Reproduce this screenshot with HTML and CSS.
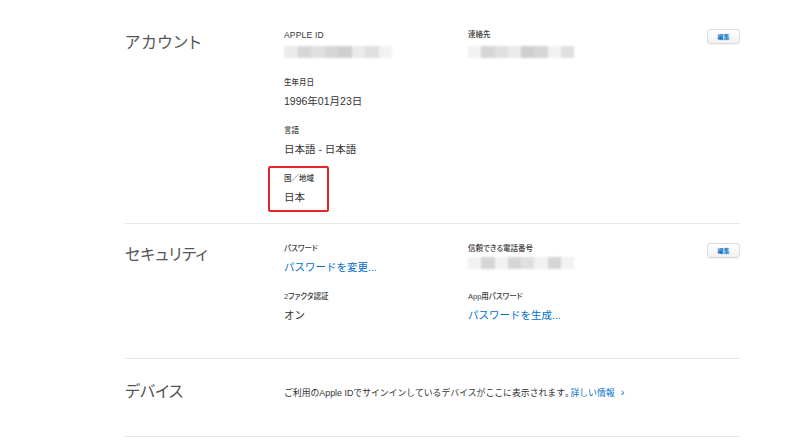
FILE: index.html
```html
<!DOCTYPE html>
<html lang="ja">
<head>
<meta charset="utf-8">
<title>Apple ID</title>
<link rel="stylesheet" href="styles.css">
</head>
<body>
<main class="page">
  <section class="section account">
    <h2 class="title">アカウント</h2>
    <div class="fields">
      <div class="field">
        <div class="label latin">APPLE ID</div>
        <div class="blur w108"><i class="b1"></i><i class="b2"></i><i class="b3"></i><i class="b2"></i><i class="b4"></i><i class="b1"></i><i class="b3"></i><i class="b5"></i></div>
      </div>
      <div class="field">
        <div class="label">連絡先</div>
        <div class="blur w106"><i class="b5"></i><i class="b2"></i><i class="b3"></i><i class="b1"></i><i class="b4"></i><i class="b2"></i><i class="b5"></i><i class="b3"></i></div>
      </div>
      <div class="field">
        <div class="label">生年月日</div>
        <div class="value">1996年01月23日</div>
      </div>
      <div class="field empty"></div>
      <div class="field">
        <div class="label">言語</div>
        <div class="value">日本語 - 日本語</div>
      </div>
      <div class="field empty"></div>
      <div class="field marked">
        <div class="label">国／地域</div>
        <div class="value">日本</div>
      </div>
    </div>
    <button class="edit">編集</button>
  </section>

  <section class="section security">
    <h2 class="title">セキュリティ</h2>
    <div class="fields">
      <div class="field">
        <div class="label">パスワード</div>
        <a class="value link" href="#">パスワードを変更...</a>
      </div>
      <div class="field">
        <div class="label">信頼できる電話番号</div>
        <div class="blur w106 phone"><i class="b5"></i><i class="b2"></i><i class="b5"></i><i class="b2"></i><i class="b3"></i><i class="b5"></i><i class="b2"></i><i class="b5"></i></div>
      </div>
      <div class="field">
        <div class="label">2ファクタ認証</div>
        <div class="value">オン</div>
      </div>
      <div class="field">
        <div class="label">App用パスワード</div>
        <a class="value link" href="#">パスワードを生成...</a>
      </div>
    </div>
    <button class="edit">編集</button>
  </section>

  <section class="section devices">
    <h2 class="title">デバイス</h2>
    <p class="note">ご利用のApple IDでサインインしているデバイスがここに表示されます<span class="stop">。</span><a class="link" href="#">詳しい情報<span class="chev">›</span></a></p>
  </section>
</main>
</body>
</html>
```

FILE: styles.css
```css
html, body {
  margin: 0;
  padding: 0;
  background: #ffffff;
}

body {
  font-family: "Liberation Sans", "Noto Sans CJK JP", sans-serif;
  color: #333333;
}

.page {
  width: 615px;
  margin-left: 125px;
}

.section {
  display: grid;
  grid-template-columns: 159px 1fr auto;
  align-items: start;
  border-bottom: 1px solid #e6e6e6;
}

.account {
  padding: 29px 0 18px;
}

.security {
  padding: 19px 0 35px;
}

.devices {
  grid-template-columns: 159px 1fr;
  align-items: start;
  box-sizing: border-box;
  height: 78px;
  padding-top: 21px;
}

.title {
  margin: 2px 0 0;
  font-family: "Noto Sans CJK JP", sans-serif;
  font-feature-settings: "palt";
  font-size: 16px;
  line-height: 20px;
  font-weight: 400;
  color: #555555;
}

.account .title {
  letter-spacing: 1.4px;
}

.security .title {
  margin-top: 0;
}

.devices .title {
  margin: 0;
}

.fields {
  display: grid;
  grid-template-columns: 184px 1fr;
  row-gap: 16px;
}

.field {
  position: relative;
  min-height: 32px;
}

.label {
  font-size: 7.5px;
  line-height: 12px;
  height: 12px;
  font-weight: 500;
  color: #3a3a3a;
  font-feature-settings: "palt";
}

.label.latin {
  font-size: 8.5px;
  font-weight: 400;
  letter-spacing: 0.2px;
  color: #333333;
}

.value {
  display: block;
  margin-top: 4px;
  font-size: 10.5px;
  line-height: 16px;
  color: #333333;
}

.link {
  color: #0070c9;
  text-decoration: none;
}

.blur {
  display: flex;
  margin-top: 5px;
  height: 12px;
  filter: blur(1.2px);
}

.blur i {
  flex: 1;
}

.w108 { width: 108px; }
.w106 { width: 106px; }

.b1 { background: #ebebeb; }
.b2 { background: #d6d6d6; }
.b3 { background: #e0e0e0; }
.b4 { background: #cfcfcf; }
.b5 { background: #f2f2f2; }

.phone {
  margin-top: 2px;
}

.marked::after {
  content: "";
  position: absolute;
  left: -16px;
  top: -7px;
  width: 57px;
  height: 42px;
  border: 2px solid #e3262b;
  border-radius: 2px;
}

.edit {
  width: 33px;
  height: 15px;
  padding: 0;
  border: 1px solid #dcdcdc;
  border-radius: 3px;
  background: linear-gradient(#ffffff, #f1f1f1);
  box-shadow: 0 1px 1px rgba(0, 0, 0, 0.04);
  font-family: "Noto Sans CJK JP", sans-serif;
  font-size: 6px;
  line-height: 13px;
  font-weight: 700;
  color: #0070c9;
}

.note {
  margin: 5px 0 0;
  font-size: 8.85px;
  line-height: 14px;
  color: #333333;
}

.stop {
  font-feature-settings: "halt";
}

.note .link {
  margin-left: 1px;
}

.chev {
  display: inline-block;
  margin-left: 6px;
  font-size: 11px;
}
```
